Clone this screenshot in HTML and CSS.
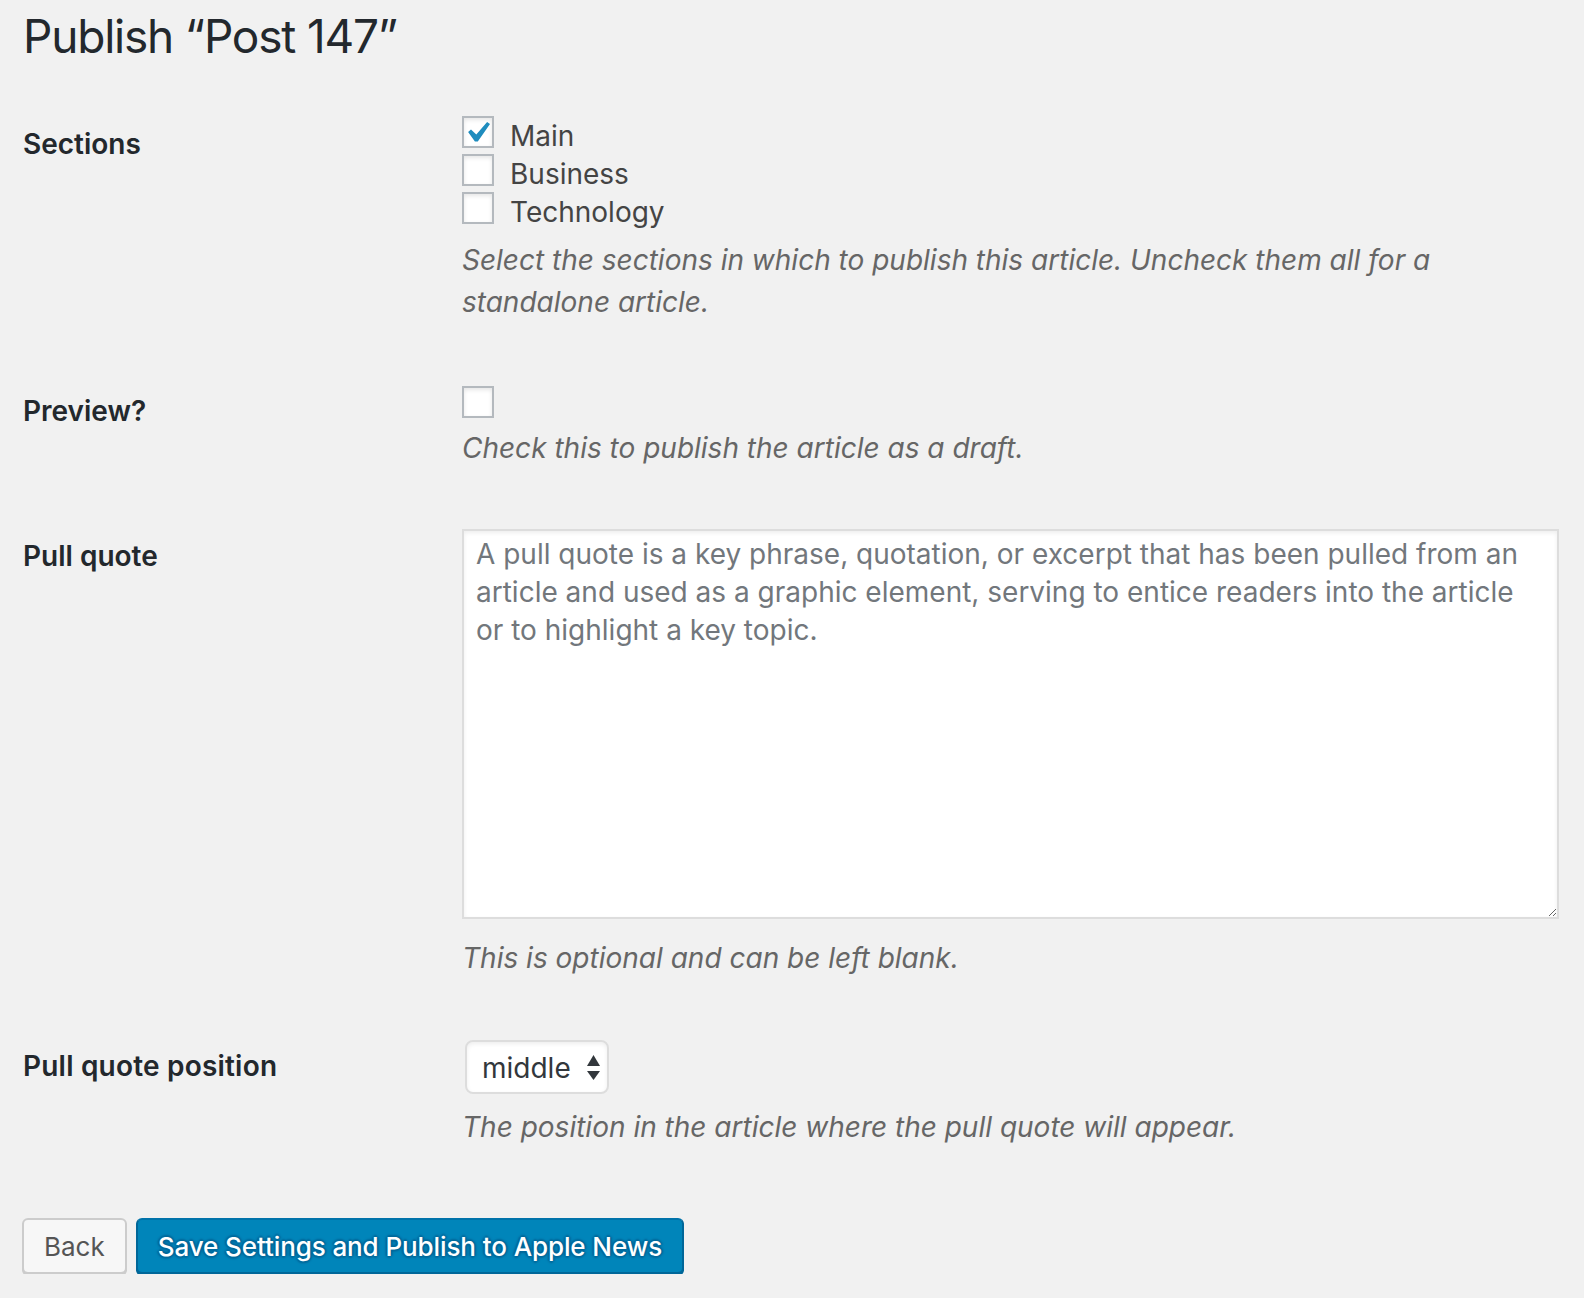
FILE: index.html
```html
<!DOCTYPE html>
<html lang="en">
<head>
<meta charset="utf-8">
<title>Publish “Post 147”</title>
<link rel="stylesheet" href="styles.css">
</head>
<body>
<div class="wrap">
  <h1 class="title">Publish “Post 147”</h1>

  <div class="row row-sections">
    <div class="th th-sections">Sections</div>
    <div class="td">
      <div class="opt">
        <span class="cb">
          <svg class="check" viewBox="0 0 28 28" width="28" height="28"><polygon points="23.1,4 26,5.9 13.8,23.5 10.9,23.5 4.1,14 7,11.4 12.3,16.4" fill="#1e8cbe"/></svg>
        </span>
        <span class="opt-text">Main</span>
      </div>
      <div class="opt">
        <span class="cb"></span>
        <span class="opt-text">Business</span>
      </div>
      <div class="opt">
        <span class="cb"></span>
        <span class="opt-text">Technology</span>
      </div>
      <p class="description desc-sections">Select the sections in which to publish this article. Uncheck them all for a standalone article.</p>
    </div>
  </div>

  <div class="row row-preview">
    <div class="th th-preview">Preview?</div>
    <div class="td">
      <span class="cb"></span>
      <p class="description desc-preview">Check this to publish the article as a draft.</p>
    </div>
  </div>

  <div class="row row-quote">
    <div class="th th-quote">Pull quote</div>
    <div class="td">
      <textarea class="quote" rows="10">A pull quote is a key phrase, quotation, or excerpt that has been pulled from an
article and used as a graphic element, serving to entice readers into the article
or to highlight a key topic.</textarea>
      <p class="description desc-quote">This is optional and can be left blank.</p>
    </div>
  </div>

  <div class="row row-position">
    <div class="th th-position">Pull quote position</div>
    <div class="td">
      <div class="select-wrap">
        <select class="select">
          <option>top</option>
          <option selected>middle</option>
          <option>bottom</option>
        </select>
        <svg class="arrows" viewBox="0 0 13 25" width="13" height="25"><polygon points="0,11 13,11 6.5,0" fill="#32373c"/><polygon points="0,16 13,16 6.5,25" fill="#32373c"/></svg>
      </div>
      <p class="description desc-position">The position in the article where the pull quote will appear.</p>
    </div>
  </div>

  <div class="actions">
    <button class="button button-back">Back</button>
    <button class="button button-primary">Save Settings and Publish to Apple News</button>
  </div>
</div>
</body>
</html>
```

FILE: styles.css
```css
html, body {
  margin: 0;
  padding: 0;
  background: #f1f1f1;
}

body {
  font-family: "Inter", "Noto Sans", "Liberation Sans", sans-serif;
  color: #444;
}

.wrap {
  padding: 0 25px 0 23px;
}

.title {
  margin: 0;
  padding-top: 6px;
  font-size: 46px;
  line-height: 60px;
  font-weight: 400;
  letter-spacing: -1.2px;
  color: #23282d;
}

.row {
  display: grid;
  grid-template-columns: 439px 1fr;
  align-items: start;
}

.row-sections { margin-top: 50px; }
.row-preview { margin-top: 63px; }
.row-quote { margin-top: 60px; }
.row-position { margin-top: 61px; }

.th {
  font-size: 28px;
  line-height: 38px;
  font-weight: 600;
  color: #23282d;
}

.th-sections { padding-top: 9px; }
.th-preview { padding-top: 6px; }
.th-quote { padding-top: 8px; }
.th-position { padding-top: 7px; letter-spacing: 0.2px; }

.td {
  min-width: 0;
}

.opt {
  display: flex;
  align-items: flex-start;
  height: 38px;
}

.opt-text {
  margin-top: 1px;
  margin-left: 16px;
  font-size: 28px;
  line-height: 38px;
  color: #444;
}

.cb {
  display: block;
  position: relative;
  width: 28px;
  height: 28px;
  border: 2px solid #b4b9be;
  background: #fff;
  box-shadow: inset 0 2px 4px rgba(0, 0, 0, 0.1);
  flex: none;
}

.check {
  position: absolute;
  left: 0;
  top: 0;
}

.description {
  margin: 0;
  font-size: 28px;
  line-height: 42px;
  font-style: italic;
  color: #666;
}

.desc-sections { margin-top: 9px; }
.desc-preview { margin-top: 9px; }
.desc-quote { margin-top: 18px; }
.desc-position { margin-top: 12px; }

.quote {
  display: block;
  box-sizing: border-box;
  width: 100%;
  height: 390px;
  margin: 0;
  padding: 4px 12px;
  border: 2px solid #ddd;
  box-shadow: inset 0 2px 4px rgba(0, 0, 0, 0.07);
  background: #fff;
  font-family: inherit;
  font-size: 28px;
  line-height: 38px;
  color: #72777c;
  outline: none;
}

.select-wrap {
  position: relative;
  width: 144px;
  height: 54px;
  margin-left: 3px;
}

.select {
  appearance: none;
  -webkit-appearance: none;
  box-sizing: border-box;
  width: 144px;
  height: 54px;
  margin: 0;
  padding: 1px 0 0 15px;
  border: 2px solid #ddd;
  border-radius: 8px;
  background: #fff;
  box-shadow: inset 0 2px 4px rgba(0, 0, 0, 0.07);
  font-family: inherit;
  font-size: 28px;
  color: #32373c;
  outline: none;
}

.arrows {
  position: absolute;
  left: 122px;
  top: 15px;
  pointer-events: none;
}

.actions {
  display: flex;
  gap: 9px;
  margin-top: 70px;
  margin-left: -1px;
}

.button {
  box-sizing: border-box;
  height: 56px;
  margin: 0;
  padding: 1px 20px 0;
  border-width: 2px;
  border-style: solid;
  border-radius: 6px;
  font-family: inherit;
  font-size: 26px;
  line-height: 48px;
  cursor: pointer;
}

.button-back {
  background: #f7f7f7;
  border-color: #ccc;
  box-shadow: 0 2px 0 #ccc;
  color: #555;
}

.button-primary {
  background: #0085ba;
  border-color: #0073aa #006799 #006799;
  box-shadow: 0 2px 0 #006799;
  color: #fff;
  font-weight: 500;
  letter-spacing: -0.1px;
  text-shadow: 0 -2px 2px #006799, 2px 0 2px #006799, 0 2px 2px #006799, -2px 0 2px #006799;
}
```
